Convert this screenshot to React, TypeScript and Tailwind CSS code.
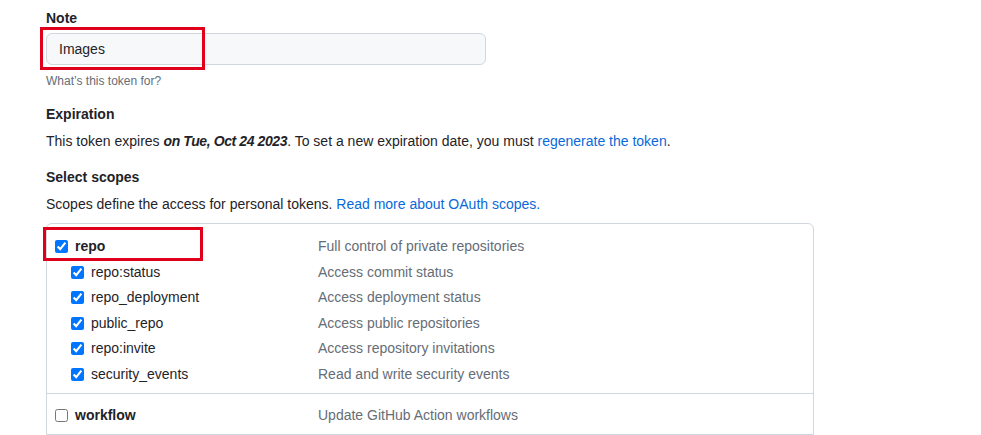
const scopes = [
  { name: "repo:status", desc: "Access commit status" },
  { name: "repo_deployment", desc: "Access deployment status" },
  { name: "public_repo", desc: "Access public repositories" },
  { name: "repo:invite", desc: "Access repository invitations" },
  { name: "security_events", desc: "Read and write security events" },
];

function Check({ checked }: { checked?: boolean }) {
  return (
    <input
      type="checkbox"
      defaultChecked={checked}
      className="m-0 w-[13px] h-[13px] shrink-0"
    />
  );
}

export default function App() {
  return (
    <div
      className="relative w-[981px] h-[435px] overflow-hidden bg-white text-[14px] text-[#1f2328]"
      style={{ fontFamily: '"Liberation Sans", "Noto Sans", sans-serif' }}
    >
      <div className="pl-[46px] pt-[8px] w-[814px]">
        {/* Note */}
        <div className="h-[21px] leading-[21px] font-semibold">Note</div>
        <div className="mt-[4px] w-[440px] h-[32px] rounded-md border border-[#d0d7de] bg-[#f6f8fa] px-[12px] pt-px flex items-center">
          Images
        </div>
        <div className="mt-[7px] h-[18px] leading-[18px] text-[12px] text-[#656d76]">
          What’s this token for?
        </div>

        {/* Expiration */}
        <div className="mt-[13.5px] h-[21px] leading-[21px] font-semibold">Expiration</div>
        <p className="mt-[6px] h-[21px] leading-[21px]">
          This token expires{" "}
          <em className="font-semibold tracking-[-0.4px]">on Tue, Oct 24 2023</em>. To set a new
          expiration date, you must{" "}
          <a className="text-[#0969da]">regenerate the token</a>.
        </p>

        {/* Scopes */}
        <div className="mt-[15px] h-[21px] leading-[21px] font-semibold">Select scopes</div>
        <p className="mt-[6px] h-[21px] leading-[21px]">
          Scopes define the access for personal tokens.{" "}
          <a className="text-[#0969da]">Read more about OAuth scopes.</a>
        </p>

        <div className="mt-[8.5px] border border-[#d0d7de] rounded-t-md">
          <div className="pt-[10px] pb-[5.5px]">
            <div className="flex items-center h-[25.5px]">
              <div className="w-[271px] flex items-center gap-[7px] pl-[8px]">
                <Check checked />
                <span className="font-semibold">repo</span>
              </div>
              <span className="text-[#656d76]">Full control of private repositories</span>
            </div>
            {scopes.map((s) => (
              <div key={s.name} className="flex items-center h-[25.5px]">
                <div className="w-[271px] flex items-center gap-[7px] pl-[24px]">
                  <Check checked />
                  <span>{s.name}</span>
                </div>
                <span className="text-[#656d76]">{s.desc}</span>
              </div>
            ))}
          </div>
          <div className="border-t border-[#d0d7de] pt-[9px] pb-[6px]">
            <div className="flex items-center h-[25.5px]">
              <div className="w-[271px] flex items-center gap-[7px] pl-[8px]">
                <Check />
                <span className="font-semibold">workflow</span>
              </div>
              <span className="text-[#656d76]">Update GitHub Action workflows</span>
            </div>
          </div>
        </div>
      </div>

      {/* annotation boxes */}
      <div className="absolute left-[40px] top-[27px] w-[165px] h-[43px] border-[3px] border-[#e0001b]" />
      <div className="absolute left-[43px] top-[227px] w-[160px] h-[34px] border-[3px] border-[#e0001b]" />
    </div>
  );
}
